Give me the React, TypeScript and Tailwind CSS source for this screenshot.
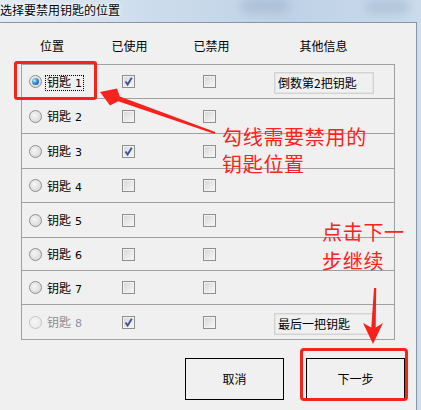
import React from "react";

type Row = {
  n: number;
  h: string;
  used?: boolean;
  selected?: boolean;
  focus?: boolean;
  disabled?: boolean;
  info?: string;
};

const rows: Row[] = [
  { n: 1, h: "h-[34px]", used: true, selected: true, focus: true, info: "倒数第2把钥匙" },
  { n: 2, h: "h-[35px]" },
  { n: 3, h: "h-[35px]", used: true },
  { n: 4, h: "h-[34px]" },
  { n: 5, h: "h-[35px]" },
  { n: 6, h: "h-[33px]" },
  { n: 7, h: "h-[34px]" },
  { n: 8, h: "h-[36px] border-b", used: true, disabled: true, info: "最后一把钥匙" },
];

const Radio = ({ checked, disabled }: { checked?: boolean; disabled?: boolean }) => (
  <span
    className={
      "flex h-[13px] w-[13px] shrink-0 items-center justify-center rounded-full border " +
      (disabled
        ? "border-[#c4c4c4] bg-[radial-gradient(circle_at_40%_40%,#f6f6f6,#e6e6e6)]"
        : "border-[#8e8f8f] bg-[radial-gradient(circle_at_40%_40%,#f6f6f6,#d0d0d0)]")
    }
  >
    {checked && (
      <span className="h-[7px] w-[7px] rounded-full bg-[radial-gradient(circle_at_35%_35%,#bfe9ff,#2a86d6_50%,#0b4f93)]" />
    )}
  </span>
);

const Check = ({ checked }: { checked?: boolean }) => (
  <span className="flex h-[13px] w-[13px] shrink-0 items-center justify-center border border-[#8e8f8f] bg-[linear-gradient(135deg,#d6d6d6,#f8f8f8)] shadow-[inset_0_0_0_1px_#f2f2f2]">
    {checked && (
      <svg width="11" height="11" viewBox="0 0 11 11">
        <path d="M2.5 5.5 L4.6 8.6 L8.8 1.8" fill="none" stroke="#3e5596" strokeWidth="1.9" />
      </svg>
    )}
  </span>
);

export default function App() {
  return (
    <div className="relative h-[410px] w-[421px] overflow-hidden bg-[#f0f0f0] font-['Noto_Sans_CJK_SC',sans-serif] text-[12px] text-black">
      {/* title bar */}
      <div className="relative h-[22px] overflow-hidden bg-[linear-gradient(90deg,#e2eaf3,#cddcec_35%,#bfd2e7_70%,#cbdbec)]">
        <div className="absolute left-[240px] top-[-2px] h-[16px] w-[50px] rounded-full bg-[#9fb6cf] opacity-60 blur-[5px]" />
        <div className="absolute left-[365px] top-[0px] h-[14px] w-[45px] rounded-full bg-[#a3b8cf] opacity-60 blur-[5px]" />
        <div className="relative leading-[20px] [text-shadow:0_0_6px_#ffffff,0_0_3px_#ffffff]">
          选择要禁用钥匙的位置
        </div>
      </div>

      <div className="flex h-[388px]">
        <div className="flex w-[417px] flex-col border-r border-t border-[#8796a7] bg-[#f0f0f0]">
          {/* column heads */}
          <div className="flex h-[41px] shrink-0 pt-[15px] leading-[16px]">
            <div className="ml-[21px] w-[62px] text-center">位置</div>
            <div className="w-[93px] text-center">已使用</div>
            <div className="w-[71px] text-center">已禁用</div>
            <div className="w-[153px] text-center">其他信息</div>
          </div>

          {/* rows */}
          <div className="ml-[21px] flex w-[374px] flex-col">
            {rows.map((r) => (
              <div key={r.n} className={"flex items-center border-x border-t border-[#a0a0a0] " + r.h}>
                <div className="ml-[7px]">
                  <Radio checked={r.selected} disabled={r.disabled} />
                </div>
                <div className="ml-[3px] w-[77px]">
                  <span
                    className={
                      "inline-flex items-baseline border px-px leading-[12px] " +
                      (r.focus ? "border-dotted border-black " : "border-transparent ") +
                      (r.disabled ? "text-[#8d8d8d]" : "")
                    }
                  >
                    钥匙
                    <span className={"ml-[4px] font-['DejaVu_Sans',sans-serif] text-[11px] " + (r.disabled ? "text-[#8a94a8]" : "")}>
                      {r.n}
                    </span>
                  </span>
                </div>
                <Check checked={r.used} />
                <div className="ml-[68px]">
                  <Check />
                </div>
                {r.info && (
                  <div className="ml-[58px] mt-[3px] h-[22px] w-[100px] border border-[#d2d2d2] bg-[#f0f0f0] pl-[3px] leading-[20px] shadow-[inset_0_0_0_1px_#e4e4e4]">
                    {r.info}
                  </div>
                )}
              </div>
            ))}
          </div>

          {/* buttons */}
          <div className="ml-[185px] mt-[18px] flex gap-[22px]">
            <div className="flex h-[42px] w-[99px] items-center justify-center border border-black bg-[#f0f0f0]">取消</div>
            <div className="flex h-[42px] w-[99px] items-center justify-center border border-black bg-[#f0f0f0]">下一步</div>
          </div>
        </div>
        <div className="flex-1 bg-[#cfdcea]" />
      </div>

      {/* annotations */}
      <div className="absolute left-[14px] top-[61px] h-[39px] w-[83px] rounded-[3px] border-[3px] border-[#f8221d]" />
      <div className="absolute left-[300px] top-[348px] h-[53px] w-[108px] rounded-[4px] border-[3px] border-[#f8221d]" />

      <svg className="pointer-events-none absolute left-0 top-0" width="421" height="410" viewBox="0 0 421 410">
        <polygon
          points="100,92 117,88.5 119.8,96.4 215.3,132.1 214.7,133.9 118.2,101.2 110,105.5"
          fill="#f8221d"
        />
        <polygon points="373,344 363,323 371.3,327.5 374,288 376.2,288 375.7,327.5 383,323" fill="#f8221d" />
      </svg>

      <div className="absolute left-[222px] top-[123px] text-[20px] leading-[27px] tracking-[0.7px] text-[#ff2020]">
        勾线需要禁用的
        <br />
        钥匙位置
      </div>
      <div className="absolute left-[322px] top-[217px] text-[20px] leading-[29px] tracking-[0.7px] text-[#ff2020]">
        点击下一
        <br />
        步继续
      </div>
    </div>
  );
}
